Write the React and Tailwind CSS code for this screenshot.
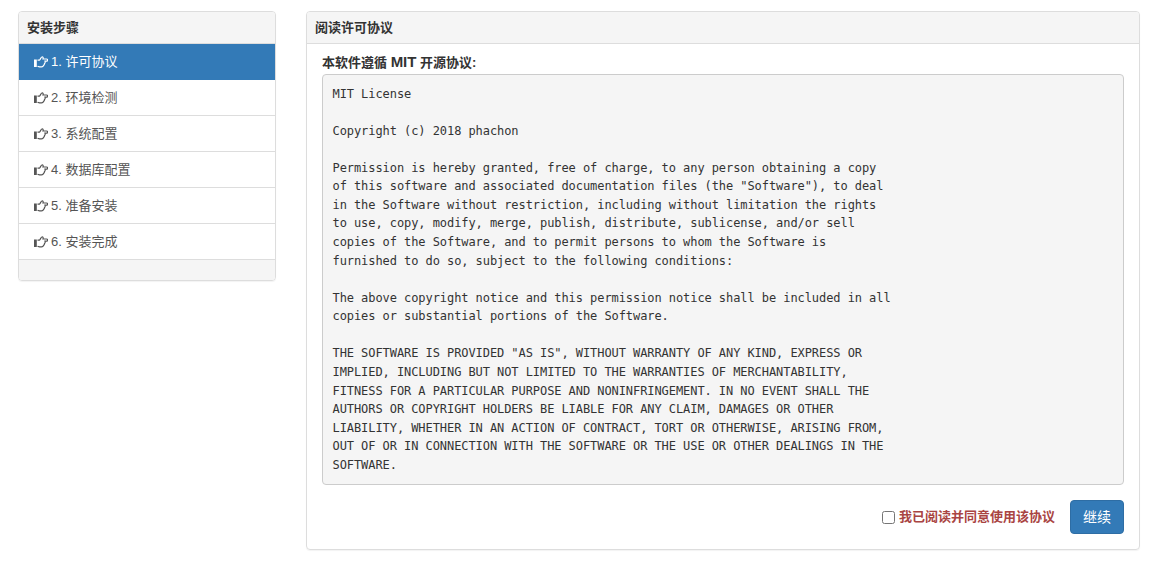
const steps = ['1. 许可协议', '2. 环境检测', '3. 系统配置', '4. 数据库配置', '5. 准备安装', '6. 安装完成']

const license = `MIT License

Copyright (c) 2018 phachon

Permission is hereby granted, free of charge, to any person obtaining a copy
of this software and associated documentation files (the "Software"), to deal
in the Software without restriction, including without limitation the rights
to use, copy, modify, merge, publish, distribute, sublicense, and/or sell
copies of the Software, and to permit persons to whom the Software is
furnished to do so, subject to the following conditions:

The above copyright notice and this permission notice shall be included in all
copies or substantial portions of the Software.

THE SOFTWARE IS PROVIDED "AS IS", WITHOUT WARRANTY OF ANY KIND, EXPRESS OR
IMPLIED, INCLUDING BUT NOT LIMITED TO THE WARRANTIES OF MERCHANTABILITY,
FITNESS FOR A PARTICULAR PURPOSE AND NONINFRINGEMENT. IN NO EVENT SHALL THE
AUTHORS OR COPYRIGHT HOLDERS BE LIABLE FOR ANY CLAIM, DAMAGES OR OTHER
LIABILITY, WHETHER IN AN ACTION OF CONTRACT, TORT OR OTHERWISE, ARISING FROM,
OUT OF OR IN CONNECTION WITH THE SOFTWARE OR THE USE OR OTHER DEALINGS IN THE
SOFTWARE.`

// pointing hand with a solid cuff
function HandIcon() {
  return (
    <svg viewBox="0 0 14 12" className="h-[12px] w-[14px] shrink-0">
      <rect x="0" y="3.5" width="2.8" height="7.5" fill="currentColor" />
      <path
        d="M3.5 4.2 L5.5 4.2 C6.5 3.2 7 1.2 8 1 C9 0.8 9.5 1.7 9 3 L12.5 3 C14 3 14 5.2 12.5 5.2 L11 5.2 C11.3 6.2 11 7.2 10.5 7.5 C10.5 8.4 10 9.1 9.5 9.4 C9.3 10.4 8.5 10.9 7.5 10.9 L5.5 10.9 L3.5 10.2"
        fill="none"
        stroke="currentColor"
        strokeWidth="1.2"
      />
    </svg>
  )
}

function Step({ label, active }) {
  return (
    <div
      className={`flex h-9 items-center gap-[3px] border-b pl-[15px] pt-[1px] ${
        active ? 'border-[#337ab7] bg-[#337ab7] text-white' : 'border-[#dddddd] bg-white text-[#555555]'
      }`}
    >
      <HandIcon />
      <span>{label}</span>
    </div>
  )
}

export default function App() {
  return (
    <div className="flex h-[564px] items-start gap-[30px] bg-white pl-[18px] pt-[11px] font-['Liberation_Sans','Noto_Sans_CJK_SC',sans-serif] text-[13px] text-[#333333]">
      <div className="w-[258px] overflow-hidden rounded border border-[#dddddd] shadow-[0_1px_1px_rgba(0,0,0,0.05)]">
        <div className="flex h-8 items-center border-b border-[#dddddd] bg-[#f5f5f5] px-2 pt-[1px] font-bold">安装步骤</div>
        {steps.map((s, i) => (
          <Step key={s} label={s} active={i === 0} />
        ))}
        <div className="h-5 bg-[#f5f5f5]"></div>
      </div>

      <div className="h-[539px] w-[834px] overflow-hidden rounded border border-[#dddddd] shadow-[0_1px_1px_rgba(0,0,0,0.05)]">
        <div className="flex h-8 items-center border-b border-[#dddddd] bg-[#f5f5f5] px-2 pt-[1px] font-bold">阅读许可协议</div>
        <div className="px-[15px] pt-2">
          <div className="mb-[3px] h-[19px] font-bold leading-[19px]">
            本软件遵循 <span className="text-[15px]">MIT</span> 开源协议:
          </div>
          <pre className="h-[411px] rounded border border-[#cccccc] bg-[#f5f5f5] p-[9.5px] font-['DejaVu_Sans_Mono',monospace] text-[12px] leading-[18.57px] tracking-[-0.07px] text-[#333333]">
            {license}
          </pre>
          <div className="mt-[15px] flex items-center justify-end">
            <input type="checkbox" className="m-0 h-[13px] w-[13px]" />
            <span className="ml-[4px] font-bold text-[#a94442]">我已阅读并同意使用该协议</span>
            <button className="ml-[15px] h-[34px] w-[54px] rounded border border-[#2e6da4] bg-[#337ab7] text-[14px] text-white">继续</button>
          </div>
        </div>
      </div>
    </div>
  )
}
